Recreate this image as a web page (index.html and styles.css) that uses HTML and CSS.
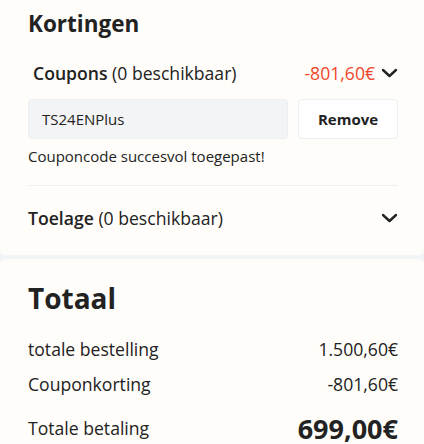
FILE: index.html
```html
<!DOCTYPE html>
<html>
<head>
<meta charset="utf-8">
<link rel="stylesheet" href="styles.css">
</head>
<body>
<section class="card card-top">
  <h2 class="title">Kortingen</h2>
  <div class="row coupons-row">
    <div class="label"><strong>Coupons</strong> (0 beschikbaar)</div>
    <div class="right">
      <span class="discount">-801,60€</span>
      <svg class="chev" width="17" height="10" viewBox="0 0 17 10"><path d="M2 2l6.5 6 6.5-6" fill="none" stroke="#222" stroke-width="2.4" stroke-linecap="round" stroke-linejoin="round"/></svg>
    </div>
  </div>
  <div class="coupon-box">
    <div class="code">TS24ENPlus</div>
    <button class="remove">Remove</button>
  </div>
  <p class="success">Couponcode succesvol toegepast!</p>
  <hr class="divider">
  <div class="row toelage-row">
    <div class="label"><strong>Toelage</strong> (0 beschikbaar)</div>
    <svg class="chev" width="17" height="10" viewBox="0 0 17 10"><path d="M2 2l6.5 6 6.5-6" fill="none" stroke="#222" stroke-width="2.4" stroke-linecap="round" stroke-linejoin="round"/></svg>
  </div>
</section>
<section class="card card-bottom">
  <h2 class="title big">Totaal</h2>
  <div class="line"><span>totale bestelling</span><span>1.500,60€</span></div>
  <div class="line"><span>Couponkorting</span><span>-801,60€</span></div>
  <div class="line total"><span>Totale betaling</span><span class="amount">699,00€</span></div>
</section>
</body>
</html>
```
FILE: styles.css
```css
* { box-sizing: border-box; }
html, body { margin: 0; padding: 0; }
body {
  background: #f3f4f6;
  font-family: "Open Sans", "Liberation Sans", sans-serif;
  color: #222;
  width: 424px;
  height: 444px;
  overflow: hidden;
}
.card {
  background: #fefdf9;
  padding: 0 26px 0 28px;
}
.card-top {
  border-radius: 0 0 6px 6px;
  padding-top: 8px;
  height: 255px;
  margin-bottom: 4px;
}
.card-bottom {
  border-radius: 6px 6px 0 0;
  padding-top: 19px;
  height: 185px;
}
.title {
  margin: 0;
  font-size: 22.5px;
  font-weight: 700;
  line-height: 32px;
  color: #222;
}
.title.big { font-size: 28px; line-height: 40px; margin-bottom: 13px; }
.row {
  display: flex;
  justify-content: space-between;
  align-items: center;
}
.coupons-row { padding: 0 0 0 5px; margin-top: 20px; height: 26px; }
.label { font-size: 17.6px; }
.label strong { font-weight: 600; }
.right { display: flex; align-items: center; gap: 6px; }
.discount { color: #f0452b; font-size: 17.6px; }
.chev { display: block; }
.coupon-box {
  display: flex;
  gap: 10px;
  margin-top: 13px;
}
.code {
  flex: 1;
  height: 40px;
  background: #f3f4f5;
  border: 1px solid #eceef0;
  border-radius: 4px;
  font-size: 15px;
  display: flex;
  align-items: center;
  padding-left: 13px;
}
.remove {
  width: 100px;
  height: 40px;
  background: #fff;
  border: 1px solid #eceef0;
  border-radius: 4px;
  font-family: inherit;
  font-size: 15px;
  font-weight: 700;
  color: #222;
}
.success {
  margin: 7px 0 0;
  font-size: 15px;
  line-height: 20px;
}
.divider {
  border: 0;
  border-top: 1px solid #eeeeec;
  margin: 19px 0 0;
}
.toelage-row { height: 64px; }
.line {
  display: flex;
  justify-content: space-between;
  align-items: center;
  font-size: 17.6px;
  height: 35px;
}
.line.total { height: 36px; margin-top: 9px; }
.amount { font-size: 27px; font-weight: 700; line-height: 1; }
```
